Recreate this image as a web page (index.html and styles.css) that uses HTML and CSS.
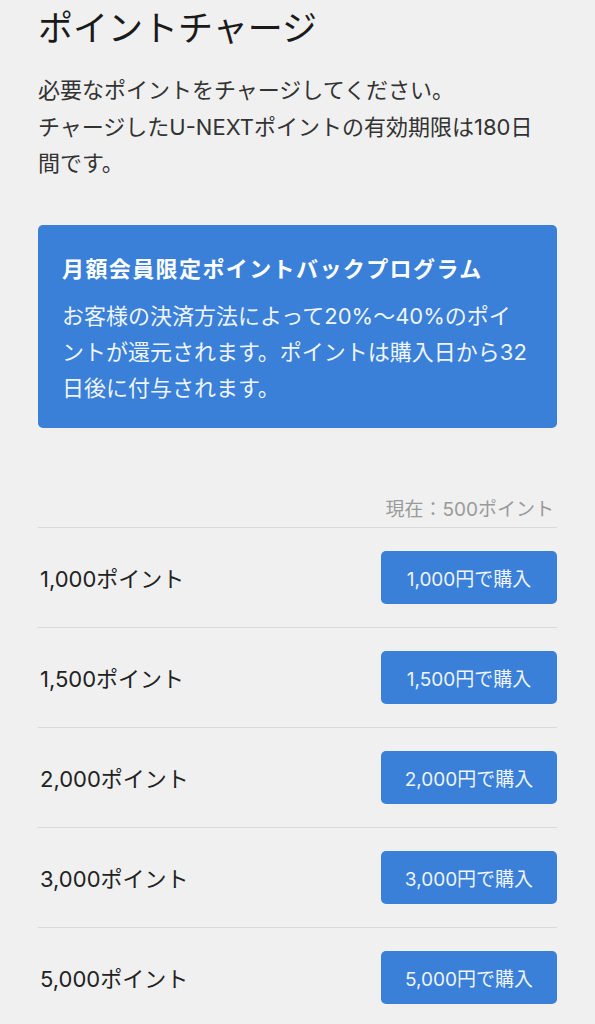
FILE: index.html
```html
<!DOCTYPE html>
<html lang="ja">
<head>
<meta charset="utf-8">
<link rel="stylesheet" href="styles.css">
</head>
<body>
<main class="page">
  <h1 class="title">ポイントチャージ</h1>
  <p class="lead">必要なポイントをチャージしてください。<br>チャージしたU-NEXTポイントの有効期限は180日<br>間です。</p>
  <section class="promo">
    <h2 class="promo-title">月額会員限定ポイントバックプログラム</h2>
    <p class="promo-body">お客様の決済方法によって20%〜40%のポイ<br>ントが還元されます。ポイントは購入日から32<br>日後に付与されます。</p>
  </section>
  <div class="current">現在：500ポイント</div>
  <ul class="list">
    <li class="row"><span class="label">1,000ポイント</span><button class="buy">1,000円で購入</button></li>
    <li class="row"><span class="label">1,500ポイント</span><button class="buy">1,500円で購入</button></li>
    <li class="row"><span class="label">2,000ポイント</span><button class="buy">2,000円で購入</button></li>
    <li class="row"><span class="label">3,000ポイント</span><button class="buy">3,000円で購入</button></li>
    <li class="row"><span class="label">5,000ポイント</span><button class="buy">5,000円で購入</button></li>
  </ul>
</main>
</body>
</html>
```

FILE: styles.css
```css
* { box-sizing: border-box; }
html, body {
  margin: 0;
  padding: 0;
  background: #f0f0f0;
}
body {
  font-family: Inter, "Noto Sans CJK JP", "Noto Sans", sans-serif;
  color: #222;
}
.page {
  padding: 0 38px;
}
.title {
  margin: 6px 0 0;
  font-size: 35px;
  line-height: 44px;
  font-weight: 400;
  color: #1a1a1a;
}
.lead {
  margin: 22px 0 0;
  font-size: 22px;
  line-height: 36.5px;
  color: #333;
  white-space: nowrap;
}
.promo {
  margin-top: 43px;
  background: #3a80d8;
  border-radius: 5px;
  padding: 26px 20px 22px 24px;
  color: #fff;
}
.promo-title {
  margin: 0 0 11px;
  font-size: 22px;
  line-height: 36px;
  font-weight: 700;
  letter-spacing: 1.4px;
}
.promo-body {
  margin: 0;
  font-size: 22px;
  line-height: 36px;
  color: #eef4fc;
  white-space: nowrap;
}
.current {
  margin-top: 68px;
  padding: 0 3px 3px 0;
  text-align: right;
  font-size: 19px;
  line-height: 28px;
  color: #9a9a9a;
}
.list {
  list-style: none;
  margin: 0;
  padding: 0;
}
.row {
  display: flex;
  align-items: center;
  justify-content: space-between;
  height: 100px;
  border-top: 1px solid #d9d9d9;
}
.label {
  font-size: 22px;
  color: #222;
  padding-left: 2px;
}
.buy {
  width: 176px;
  height: 53px;
  border: none;
  border-radius: 5px;
  background: #3a80d8;
  color: #eef4fc;
  font-family: inherit;
  font-size: 19px;
  padding: 0;
}
```
